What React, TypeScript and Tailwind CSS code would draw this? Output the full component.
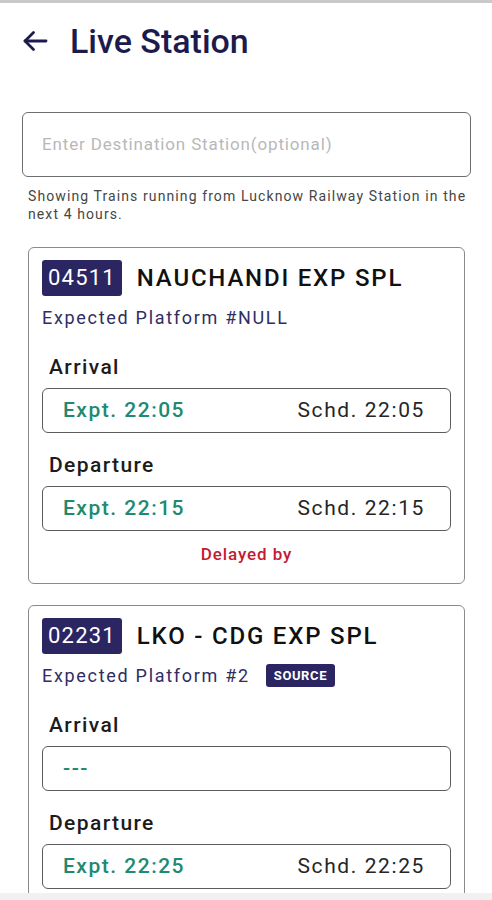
import React from 'react';

type Train = {
  number: string;
  name: string;
  platform: string;
  source?: boolean;
  arrival?: { expt: string; schd: string };
  departure?: { expt: string; schd: string };
  delayed?: boolean;
};

const trains: Train[] = [
  {
    number: '04511',
    name: 'NAUCHANDI EXP SPL',
    platform: '#NULL',
    arrival: { expt: '22:05', schd: '22:05' },
    departure: { expt: '22:15', schd: '22:15' },
    delayed: true,
  },
  {
    number: '02231',
    name: 'LKO - CDG EXP SPL',
    platform: '#2',
    source: true,
    departure: { expt: '22:25', schd: '22:25' },
  },
];

const TimeBox: React.FC<{ label: string; time?: { expt: string; schd: string } }> = ({ label, time }) => (
  <div>
    <div className="pl-[7px] text-[21px] leading-[24px] font-medium tracking-[1.4px] text-[#1c1c1c]">{label}</div>
    <div className="mt-[9px] h-[45px] border border-[#5c5c5c] rounded-[6px] flex items-center justify-between pl-[20px] pr-[25px]">
      <span className="text-[21px] font-medium tracking-[1.5px] text-[#1f8a70]">{time ? `Expt. ${time.expt}` : '---'}</span>
      {time && <span className="text-[21px] tracking-[1.6px] text-[#262626]">Schd. {time.schd}</span>}
    </div>
  </div>
);

const TrainCard: React.FC<{ train: Train }> = ({ train }) => (
  <div className="ml-[28px] mr-[27px] border border-[#8a8a8a] rounded-[6px] px-[13px] pt-[12px] pb-[19px]">
    <div className="flex items-center gap-[15px]">
      <span className="bg-[#2b2562] text-white text-[22px] tracking-[1.2px] leading-[36px] h-[36px] px-[6px] rounded-[3px]">
        {train.number}
      </span>
      <span className="text-[24px] font-medium tracking-[1.8px] text-[#111]">{train.name}</span>
    </div>
    <div className="mt-[10px] h-[22px] flex items-center gap-[16px]">
      <span className="text-[18px] tracking-[1.7px] text-[#2f2d63]">Expected Platform {train.platform}</span>
      {train.source && (
        <span className="bg-[#2b2562] text-white text-[13px] font-bold tracking-[0.6px] leading-[23px] h-[23px] px-[8px] rounded-[3px]">
          SOURCE
        </span>
      )}
    </div>
    <div className="mt-[27px] flex flex-col gap-[20px]">
      <TimeBox label="Arrival" time={train.arrival} />
      <TimeBox label="Departure" time={train.departure} />
    </div>
    {train.delayed && (
      <div className="mt-[13px] leading-[20px] text-center text-[17px] font-medium tracking-[0.9px] text-[#c41a32]">
        Delayed by
      </div>
    )}
  </div>
);

const App: React.FC = () => {
  return (
    <div className="h-[900px] w-[492px] flex flex-col bg-white overflow-hidden" style={{ fontFamily: 'Roboto, "Noto Sans", sans-serif' }}>
      <div className="h-[3px] bg-[#c9c9c9] shrink-0" />
      <div className="flex-1 overflow-hidden">
        {/* Header */}
        <div className="flex items-center h-[76px] pl-[22px] gap-[22px]">
          <svg width="26" height="22" viewBox="0 0 26 22" fill="none" stroke="#1d1b4d" strokeWidth="2.8" strokeLinecap="round" strokeLinejoin="round">
            <path d="M24 11H3" />
            <path d="M11.5 2.5L3 11l8.5 8.5" />
          </svg>
          <h1 className="text-[34px] font-medium text-[#1d1b4d]">Live Station</h1>
        </div>

        {/* Search */}
        <div className="mt-[33px] ml-[22px] mr-[21px] h-[65px] border border-[#6e6e6e] rounded-[6px] flex items-center px-[19px]">
          <span className="text-[17px] tracking-[0.85px] text-[#b8b8b8]">Enter Destination Station(optional)</span>
        </div>
        <p className="mt-[10px] ml-[28px] mr-[20px] text-[14px] leading-[18px] tracking-[1.1px] text-[#464646]">
          Showing Trains running from Lucknow Railway Station in the next 4 hours.
        </p>

        <div className="mt-[24px] flex flex-col gap-[21px]">
          {trains.map(t => (
            <TrainCard key={t.number} train={t} />
          ))}
        </div>
      </div>
      <div className="h-[7px] bg-[#f1f1f1] shrink-0" />
    </div>
  );
};

export default App;
